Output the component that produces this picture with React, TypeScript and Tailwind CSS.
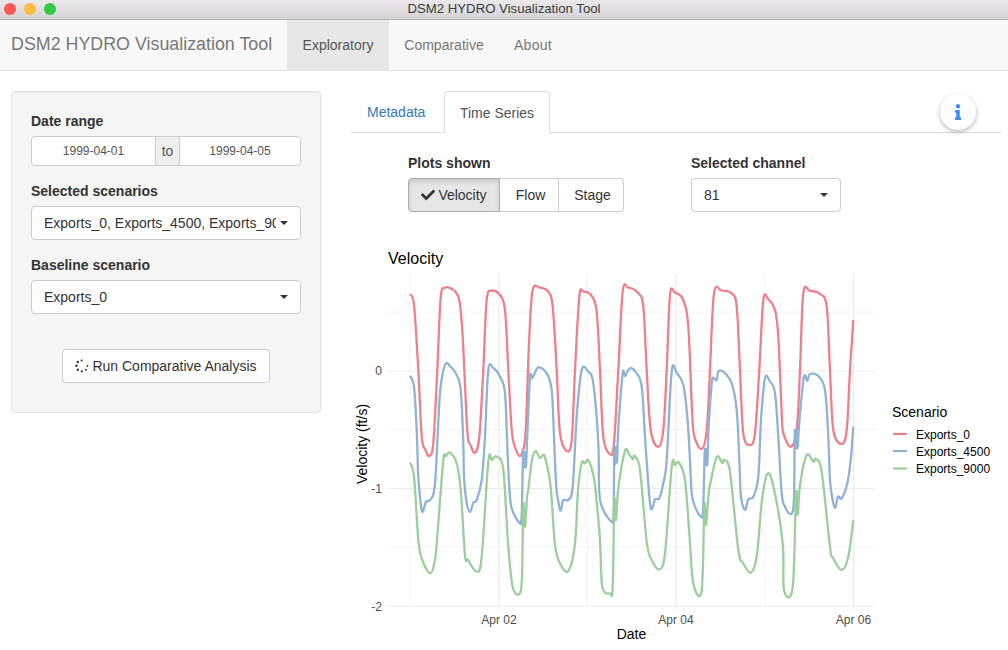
import type { FC, ReactNode } from "react";
import { FaCheck, FaInfo } from "react-icons/fa";

type Point = [number, number];

// traced from the plot, in page pixels
const redLine: Point[] = [
  [410, 294], [414, 305], [418.3, 370], [421.7, 436.7], [425, 449], [429.3, 456], [433.3, 443], [437.3, 370], [440.7, 298], [445, 287.7], [453.3, 290], [459.3, 300], [462.7, 336.7], [467.3, 430], [470.5, 445], [475, 452.7], [479.3, 436.7], [483.3, 370], [486.7, 300], [491.7, 290.7], [500, 295], [505, 310], [508.3, 370], [511.7, 430], [515, 447], [519.5, 456], [523, 450], [525.7, 430], [529.3, 336.7], [532.7, 290], [540, 287.7], [548.3, 291.7], [552.7, 306.7], [556.7, 370], [560, 433], [566.7, 451], [571.7, 440], [575, 370], [579.3, 296.7], [583.3, 291.7], [591.7, 296], [596.7, 311.7], [600, 370], [603.3, 436.7], [610, 454.3], [614, 443], [618.3, 370], [622.7, 291.7], [628.3, 287.7], [638.3, 293.3], [643.3, 306.7], [646.7, 370], [650.7, 430], [658.3, 446.7], [663.3, 430], [666.7, 370], [670, 295], [675, 292.7], [683.3, 300], [688.3, 326.7], [691.7, 403], [694, 435], [701.7, 449], [706.7, 430], [710, 370], [714, 293.3], [721.7, 290.7], [731.7, 293.3], [736.7, 306.7], [740, 370], [743.3, 433.3], [750, 445], [755, 433], [759.3, 370], [763.3, 300], [768.3, 299.3], [775, 310], [778.3, 336.7], [781.7, 413], [783.3, 433], [790.7, 446.7], [796.7, 430], [800, 370], [803.3, 293.3], [810, 291], [820, 294], [826.7, 306.7], [830, 370], [833.3, 430], [841.7, 444], [846.7, 430], [850, 370], [853.3, 320],
];

const blueLine: Point[] = [
  [410, 375.7], [414, 386.7], [416.7, 430], [418.3, 476.7], [420.7, 503.3], [422.7, 512], [426, 501.7], [430, 500], [435, 483.3], [440, 393], [445, 365], [450, 366], [456.7, 375], [460.7, 390], [463.3, 443], [464, 476.7], [466.7, 503], [470, 512], [473.3, 502.7], [476.7, 500], [481.7, 480], [485, 436.7], [488.3, 370], [493.3, 368], [500, 376.7], [505, 393], [507.3, 446.7], [509.3, 486.7], [511.7, 508.3], [519.5, 523], [521.5, 518], [522.5, 480], [523, 452], [524, 468], [525, 452], [526, 467], [527.5, 430], [530, 377], [532, 378], [534, 375], [538.3, 367.3], [546.7, 373.3], [551.7, 390], [554, 436.7], [556, 483], [558.3, 501.7], [560.7, 510.7], [563.3, 500], [568.3, 500], [572.7, 486.7], [576.7, 416.7], [581.7, 370], [588.3, 371.7], [593.3, 383.3], [598.3, 443], [599.3, 493], [603.3, 510], [611.7, 521.7], [613.5, 515], [614.3, 448], [615.3, 464], [616.3, 447], [617, 462], [618.5, 425], [622.7, 373.3], [625, 376], [630, 368.3], [636.7, 373.3], [641.7, 386.7], [645, 436.7], [647.3, 470], [650, 503.3], [652, 509], [655, 499.3], [659.3, 498.3], [663.3, 483.3], [666.7, 460], [671.7, 371.7], [676.7, 373], [683.3, 385], [687.3, 416.7], [690, 460], [691.7, 493.3], [695, 506.7], [701.3, 517], [703, 512], [704, 480], [704.8, 449], [705.8, 465], [706.6, 449], [707.3, 465], [708.5, 430], [711.7, 383.3], [713.3, 378], [716.7, 380], [718.3, 371.7], [723.3, 371.7], [731.7, 383.3], [736.7, 410], [739.3, 460], [741, 496.7], [745, 510], [748.3, 499.3], [753.3, 496.7], [758.3, 476.7], [761, 420], [765, 378.3], [770, 381.7], [775, 393], [778.3, 436.7], [781.7, 493.3], [785, 506.7], [790, 514], [793, 510], [794.2, 490], [794.8, 431], [795.8, 448], [796.7, 431], [797.5, 448], [800, 413.3], [804, 376.7], [807.3, 380.7], [810, 374], [818.3, 376], [825, 390], [828.3, 436.7], [830, 480], [832.7, 500], [835.3, 507.7], [838, 496.7], [841.7, 498.3], [847.3, 483.3], [850.7, 460], [853.3, 426.7],
];

const greenLine: Point[] = [
  [410, 462.7], [414, 476.7], [418.3, 540], [421.7, 558.3], [430, 573.3], [435, 560], [438.3, 523.3], [443.3, 460], [446, 456], [450, 452.7], [456.7, 463.3], [460.7, 490], [465, 555], [468, 560], [476.7, 571.7], [481.7, 556.7], [488.3, 461.7], [492, 460], [496.7, 456.7], [503.3, 470], [508.3, 546.7], [512.7, 586.7], [519.3, 594], [522, 576.7], [523.3, 504], [525, 526.7], [527, 497], [528.3, 490], [532, 460], [535.7, 451], [540, 458], [544, 455], [548, 470], [551, 490], [555, 545], [560, 563.3], [568.3, 571], [575, 543.3], [578, 490], [581.7, 463], [585, 463.3], [588.3, 460], [593.3, 475], [596, 495], [600, 540], [602.3, 586.7], [610, 593.3], [612.7, 586.7], [614.3, 500], [616, 520], [618.3, 488.3], [625, 451], [629, 454], [632.7, 459.3], [634.5, 456], [640, 470], [646.7, 541.7], [651.7, 560], [659.3, 569.3], [665, 553.3], [671.7, 466.7], [675, 465], [679, 462.7], [685, 480], [689.3, 533.3], [693.3, 583.3], [701.7, 590], [704.3, 505], [706, 525], [708.5, 495], [710, 485], [716.7, 457], [722.3, 463], [724.3, 460], [730, 472], [738.3, 550], [743.3, 563.3], [750.7, 572.7], [756.7, 556.7], [762, 500], [767.3, 474], [773.3, 486], [782.7, 543.3], [784, 590], [792.7, 587.3], [796, 493.3], [797.7, 515], [800, 485], [806.7, 455], [813.3, 461.7], [816, 459], [821.7, 471.7], [830, 546.7], [833.3, 558.3], [841.7, 570], [848.3, 556.7], [853.3, 520],
];

const smoothPath = (pts: Point[]) => {
  let d = `M${pts[0][0]} ${pts[0][1]}`;
  for (let i = 0; i < pts.length - 1; i++) {
    const p0 = pts[Math.max(i - 1, 0)];
    const p1 = pts[i];
    const p2 = pts[i + 1];
    const p3 = pts[Math.min(i + 2, pts.length - 1)];
    const c1x = p1[0] + (p2[0] - p0[0]) / 6;
    const c1y = p1[1] + (p2[1] - p0[1]) / 6;
    const c2x = p2[0] - (p3[0] - p1[0]) / 6;
    const c2y = p2[1] - (p3[1] - p1[1]) / 6;
    d += `C${c1x.toFixed(1)} ${c1y.toFixed(1)} ${c2x.toFixed(1)} ${c2y.toFixed(1)} ${p2[0]} ${p2[1]}`;
  }
  return d;
};

const RED = "#ef7f8a";
const BLUE = "#8fb2d6";
const GREEN = "#9acf9c";

const Caret: FC = () => (
  <span className="h-0 w-0 border-x-4 border-t-4 border-x-transparent border-t-[#333]" />
);

const FieldLabel: FC<{ children: ReactNode }> = ({ children }) => (
  <div className="mb-[5px] h-5 text-sm leading-5 font-bold text-[#333]">{children}</div>
);

const SelectBox: FC<{ children: ReactNode; className?: string }> = ({ children, className }) => (
  <div
    className={`flex h-[34px] items-center justify-between rounded border border-[#ccc] bg-white pr-3 pl-3 text-sm text-[#333] ${className ?? ""}`}
  >
    <span className="block w-[232px] overflow-hidden whitespace-nowrap">{children}</span>
    <Caret />
  </div>
);

const DateInput: FC<{ value: string; className: string }> = ({ value, className }) => (
  <div className={`flex h-full items-center justify-center text-xs text-[#555] ${className}`}>{value}</div>
);

const Spinner: FC = () => (
  <svg width="14" height="14" viewBox="0 0 14 14" fill="#333" className="mr-[3px]">
    <circle cx="6.6" cy="1.4" r="1" />
    <circle cx="2.8" cy="3" r="1.2" />
    <circle cx="1.4" cy="6.8" r="1.2" />
    <circle cx="2.8" cy="10.8" r="1.2" />
    <circle cx="6.8" cy="12.4" r="1.1" />
    <circle cx="10.8" cy="10.8" r="1" />
    <circle cx="12.4" cy="7" r="0.9" />
  </svg>
);

const Chart: FC = () => (
  <svg
    viewBox="351 240 650 410"
    width="650"
    height="410"
    className="mt-[28px] block font-['Liberation_Sans',sans-serif]"
  >
    {[312, 429.5, 547].map((y) => (
      <line key={y} x1="388" x2="875" y1={y} y2={y} stroke="#f4f4f4" strokeWidth="1" />
    ))}
    {[410, 587.5, 765].map((x) => (
      <line key={x} x1={x} x2={x} y1="273" y2="609" stroke="#f4f4f4" strokeWidth="1" />
    ))}
    {[371, 488.5, 606].map((y) => (
      <line key={y} x1="388" x2="875" y1={y} y2={y} stroke="#ebebeb" strokeWidth="1.2" />
    ))}
    {[499, 676, 853.5].map((x) => (
      <line key={x} x1={x} x2={x} y1="273" y2="609" stroke="#ebebeb" strokeWidth="1.2" />
    ))}

    <path d={smoothPath(redLine)} fill="none" stroke={RED} strokeWidth="2.3" strokeLinejoin="round" />
    <path d={smoothPath(blueLine)} fill="none" stroke={BLUE} strokeWidth="2.3" strokeLinejoin="round" />
    <path d={smoothPath(greenLine)} fill="none" stroke={GREEN} strokeWidth="2.3" strokeLinejoin="round" />

    <text x="388" y="264" fontSize="16" fill="#000">Velocity</text>
    <g fontSize="12" fill="#4d4d4d" textAnchor="end">
      <text x="382" y="375">0</text>
      <text x="382" y="493">-1</text>
      <text x="382" y="611">-2</text>
    </g>
    <g fontSize="12" fill="#4d4d4d" textAnchor="middle">
      <text x="499" y="624">Apr 02</text>
      <text x="676" y="624">Apr 04</text>
      <text x="853.5" y="624">Apr 06</text>
    </g>
    <text x="631.5" y="639" fontSize="14" fill="#000" textAnchor="middle">Date</text>
    <text x="367" y="444" fontSize="14" fill="#000" textAnchor="middle" transform="rotate(-90 367 444)">
      Velocity (ft/s)
    </text>

    <text x="892" y="417" fontSize="14" fill="#000">Scenario</text>
    {[
      { label: "Exports_0", y: 434, color: RED },
      { label: "Exports_4500", y: 451, color: BLUE },
      { label: "Exports_9000", y: 468.5, color: GREEN },
    ].map(({ label, y, color }) => (
      <g key={label}>
        <line x1="893" x2="907" y1={y} y2={y} stroke={color} strokeWidth="2.2" />
        <text x="916" y={y + 4.5} fontSize="12" fill="#000">{label}</text>
      </g>
    ))}
  </svg>
);

export default function App() {
  return (
    <div className="h-[650px] w-[1008px] overflow-hidden bg-white font-['Liberation_Sans',sans-serif] text-sm text-[#333]">
      {/* window title bar */}
      <div className="relative flex h-5 items-center justify-center border-b border-[#b4b2b4] bg-linear-to-b from-[#ebe9eb] to-[#d4d2d4] text-[13.2px] text-[#3a3a3a]">
        <div className="absolute top-[3px] left-1 flex gap-2">
          <span className="h-3 w-3 rounded-full bg-[#fc5753]" />
          <span className="h-3 w-3 rounded-full bg-[#fdbc40]" />
          <span className="h-3 w-3 rounded-full bg-[#33c748]" />
        </div>
        <span>DSM2 HYDRO Visualization Tool</span>
      </div>

      {/* navbar */}
      <nav className="flex h-[51px] border-b border-[#e7e7e7] bg-[#f8f8f8] text-[#777]">
        <div className="flex w-[287px] items-center pl-[11px] text-[17.85px]">DSM2 HYDRO Visualization Tool</div>
        <div className="flex h-[50px] w-[102px] items-center justify-center bg-[#e7e7e7] text-[#555]">Exploratory</div>
        <div className="flex w-[110px] items-center justify-center">Comparative</div>
        <div className="flex items-center pl-[15px] tracking-[0.02em]">About</div>
      </nav>

      <div className="flex pt-[20px] pl-[11px]">
        {/* sidebar */}
        <aside className="h-[322px] w-[310px] rounded border border-[#e3e3e3] bg-[#f5f5f5] p-[19px] shadow-[inset_0_1px_1px_rgba(0,0,0,0.05)]">
          <FieldLabel>Date range</FieldLabel>
          <div className="mb-[15px] flex h-[30px] overflow-hidden rounded border border-[#ccc] bg-white">
            <DateInput value="1999-04-01" className="w-[123px]" />
            <div className="flex w-[25px] items-center justify-center border-x border-[#ccc] bg-[#eee] text-[#555]">to</div>
            <DateInput value="1999-04-05" className="flex-1" />
          </div>

          <FieldLabel>Selected scenarios</FieldLabel>
          <SelectBox className="mb-[15px]">Exports_0, Exports_4500, Exports_9000</SelectBox>

          <FieldLabel>Baseline scenario</FieldLabel>
          <SelectBox>Exports_0</SelectBox>

          <div className="mt-[35px] flex justify-center">
            <button className="flex h-[34px] w-[208px] items-center justify-center rounded border border-[#ccc] bg-white text-[#333]">
              <Spinner />
              Run Comparative Analysis
            </button>
          </div>
        </aside>

        <main className="relative ml-[30px] w-[650px]">
          {/* tabs */}
          <div className="flex h-[42px] border-b border-[#ddd]">
            <div className="flex h-[41px] w-[93px] items-center pl-4 text-[#337ab7]">Metadata</div>
            <div className="-mb-px flex h-[42px] w-[106px] items-center justify-center rounded-t border border-b-0 border-[#ddd] bg-white text-[#555]">
              Time Series
            </div>
          </div>
          <div className="absolute top-[3px] left-[589px] flex h-9 w-9 items-center justify-center rounded-full bg-white text-[#3b8ef8] shadow-[0_2px_5px_rgba(0,0,0,0.28)]">
            <FaInfo size={16} />
          </div>

          {/* plot controls */}
          <div className="mt-5 flex pl-[57px]">
            <div className="w-[283px]">
              <FieldLabel>Plots shown</FieldLabel>
              <div className="flex h-[34px] w-[216px] text-[#333]">
                <div className="flex w-[92px] items-center justify-center gap-[3px] rounded-l border border-[#adadad] bg-[#e6e6e6] shadow-[inset_0_3px_5px_rgba(0,0,0,0.125)]">
                  <FaCheck size={14} />
                  Velocity
                </div>
                <div className="flex w-[59px] items-center justify-center border-y border-r border-[#ccc] pl-[3px]">Flow</div>
                <div className="flex w-[65px] items-center justify-center rounded-r border-y border-r border-[#ccc] pl-[3px]">Stage</div>
              </div>
            </div>
            <div className="w-[150px]">
              <FieldLabel>Selected channel</FieldLabel>
              <SelectBox>81</SelectBox>
            </div>
          </div>

          <Chart />
        </main>
      </div>
    </div>
  );
}
